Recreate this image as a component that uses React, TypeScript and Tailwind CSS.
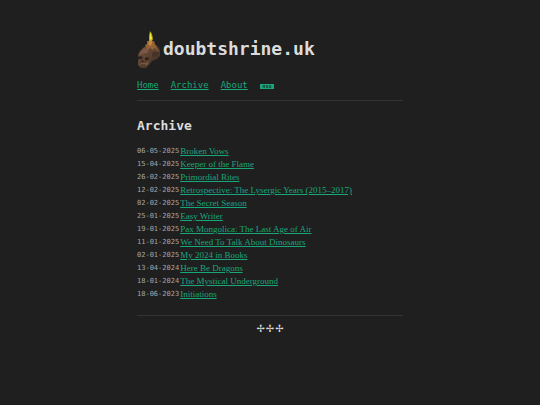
const posts = [
  { date: "06-05-2025", title: "Broken Vows" },
  { date: "15-04-2025", title: "Keeper of the Flame" },
  { date: "26-02-2025", title: "Primordial Rites" },
  { date: "12-02-2025", title: "Retrospective: The Lysergic Years (2015–2017)" },
  { date: "02-02-2025", title: "The Secret Season" },
  { date: "25-01-2025", title: "Easy Writer" },
  { date: "19-01-2025", title: "Pax Mongolica: The Last Age of Air" },
  { date: "11-01-2025", title: "We Need To Talk About Dinosaurs" },
  { date: "02-01-2025", title: "My 2024 in Books" },
  { date: "13-04-2024", title: "Here Be Dragons" },
  { date: "18-01-2024", title: "The Mystical Underground" },
  { date: "18-06-2023", title: "Initiations" },
];

function SkullCandle() {
  return (
    <svg viewBox="0 0 24 38" className="h-[38px] w-6 shrink-0" aria-hidden="true">
      <defs>
        <linearGradient id="bone" x1="0" y1="0" x2="1" y2="1">
          <stop offset="0" stopColor="#6f513d" />
          <stop offset="0.5" stopColor="#5b4131" />
          <stop offset="1" stopColor="#33271f" />
        </linearGradient>
      </defs>
      <path d="M6 18 L10 15 L19 15 L22 18 L23 21 L23 26 L20 29 L15 31 L12 35 L9 38 L4 38 L1 35 L1 31 L2 28 L1 25 L3 21Z" fill="url(#bone)" />
      <path d="M3 23 L7 18 L12 20 L10 23 L5 24 L2 26Z" fill="#7a5843" />
      <path d="M2 27 L4 26 L6 28 L4 29 L2 29Z M8 28 L11 27 L12 29 L10 30 L8 30Z" fill="#2a1f1b" />
      <path d="M5 30 L7 31 L6 32 L4 32Z" fill="#33261f" />
      <path d="M2 34 L5 33 L9 33 L12 31 L11 34 L9 36 L4 36Z" fill="#7a5943" />
      <path d="M3 35 H9 M5 34 V37 M7 34 V37" stroke="#3b2c23" strokeWidth="0.6" />
      <path d="M15 23 L20 21 L22 24 L18 27 L15 27Z" fill="#45332a" />
      <path d="M18 18 L21 19 L22 22 L19 21Z" fill="#755038" />
      <path d="M10 11 L17 11 L18 14 L19 16 L20 19 L17 18 L16 20 L13 18 L10 20 L9 17 L8 15 L10 14Z" fill="#946335" />
      <path d="M12 11 H15 L15 14 L13 16 L11 14Z" fill="#c4863e" />
      <path d="M13 1 L15 4 L16 9 L15 11 H12 L12 6Z" fill="#b5a519" />
      <path d="M13 2 L14 5 L15 9 L13 10Z" fill="#f5ed3d" />
    </svg>
  );
}

const link = "text-[#1aa67b] underline underline-offset-1";

export default function App() {
  return (
    <div className="min-h-screen bg-[#1f1f1f] font-['DejaVu_Sans_Mono',monospace] text-[#dcdcdc]">
      <div className="mx-auto w-full max-w-[266px] pt-[30px]">
        <header className="border-b border-[#333333] pb-2">
          <div className="flex items-center gap-[2px]">
            <SkullCandle />
            <h1 className="text-[18px] leading-6 font-bold">doubtshrine.uk</h1>
          </div>
          <nav className="mt-[10px] flex items-center gap-3 text-[9px] leading-[14px]">
            <a href="#home" className={link}>Home</a>
            <a href="#archive" className={link}>Archive</a>
            <a href="#about" className={link}>About</a>
            <a href="#rss" aria-label="RSS" className="mt-[2px] flex h-[5px] w-[14px] items-center justify-center bg-[#1aa67b]">
              <svg viewBox="0 0 14 5" className="h-[5px] w-[14px]" aria-hidden="true">
                <path d="M3 4V1.5H5V2.5H3.5L5 4M8 1.5H6.5V2.5H8V3.5H6M11 1.5H9.5V2.5H11V3.5H9" fill="none" stroke="#17493a" strokeWidth="0.8" />
              </svg>
            </a>
          </nav>
        </header>
        <main>
          <h2 className="mt-[15px] text-[13px] leading-5 font-bold">Archive</h2>
          <ul className="mt-[9px] border-b border-[#333333] pb-[14px]">
            {posts.map((post) => (
              <li key={post.title} className="flex h-[13px] items-center gap-px whitespace-nowrap">
                <time className="text-[7px] leading-[13px] text-[#a6a6a6]">{post.date}</time>
                <a href="#post" className="font-['Liberation_Serif',serif] text-[9px] leading-[13px] text-[#1aa67b] underline underline-offset-1">
                  {post.title}
                </a>
              </li>
            ))}
          </ul>
        </main>
        <footer className="mt-1 flex justify-center gap-px font-['DejaVu_Sans',sans-serif] text-[10px] leading-[18px] font-bold">
          <span>✢</span>
          <span>✢</span>
          <span>✢</span>
        </footer>
      </div>
    </div>
  );
}
